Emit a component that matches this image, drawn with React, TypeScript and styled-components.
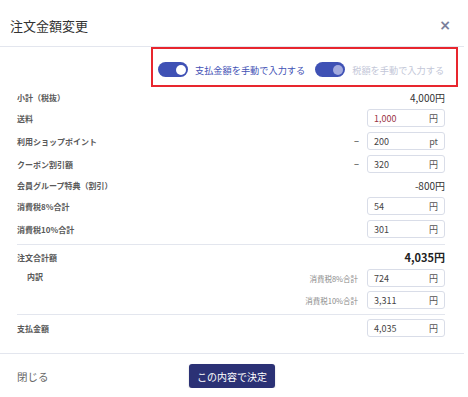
import React from 'react'
import styled, { createGlobalStyle } from 'styled-components'

const GlobalStyle = createGlobalStyle`
  body {
    margin: 0;
    background: #fff;
    font-family: "Noto Sans CJK JP", "Noto Sans", sans-serif;
    color: #333;
  }
`

export const App = () => {
  return (
    <Dialog>
      <GlobalStyle />
      <Header>
        <Title>注文金額変更</Title>
        <Close>×</Close>
      </Header>

      <ToggleBar>
        <ToggleItem>
          <Switch><Knob /></Switch>
          <ToggleLabel>支払金額を手動で入力する</ToggleLabel>
        </ToggleItem>
        <ToggleItem>
          <Switch><Knob $dim /></Switch>
          <ToggleLabel $dim>税額を手動で入力する</ToggleLabel>
        </ToggleItem>
      </ToggleBar>

      <Body>
        <Section $top>
          <Row $text>
            <Label>小計（税抜）</Label>
            <Value>4,000円</Value>
          </Row>
          <Row>
            <Label>送料</Label>
            <Field value='1,000' unit='円' accent />
          </Row>
          <Row>
            <Label>利用ショップポイント</Label>
            <Right>
              <Minus>−</Minus>
              <Field value='200' unit='pt' />
            </Right>
          </Row>
          <Row>
            <Label>クーポン割引額</Label>
            <Right>
              <Minus>−</Minus>
              <Field value='320' unit='円' />
            </Right>
          </Row>
          <Row $text>
            <Label>会員グループ特典（割引）</Label>
            <Value>-800円</Value>
          </Row>
          <Row>
            <Label>消費税8%合計</Label>
            <Field value='54' unit='円' />
          </Row>
          <Row>
            <Label>消費税10%合計</Label>
            <Field value='301' unit='円' />
          </Row>
        </Section>

        <Section>
          <Row $text>
            <Label>注文合計額</Label>
            <Value $bold>4,035円</Value>
          </Row>
          <Breakdown>
            <SubLabel>内訳</SubLabel>
            <SubRows>
              <Right>
                <TaxLabel>消費税8%合計</TaxLabel>
                <Field value='724' unit='円' />
              </Right>
              <Right>
                <TaxLabel>消費税10%合計</TaxLabel>
                <Field value='3,311' unit='円' />
              </Right>
            </SubRows>
          </Breakdown>
        </Section>

        <Section $last>
          <Row>
            <Label>支払金額</Label>
            <Field value='4,035' unit='円' />
          </Row>
        </Section>
      </Body>

      <Footer>
        <CloseLink>閉じる</CloseLink>
        <Submit>この内容で決定</Submit>
        <span />
      </Footer>
    </Dialog>
  )
}

const Field = ({ value, unit, accent }: { value: string; unit: string; accent?: boolean }) => (
  <InputBox>
    <InputText $accent={accent}>{value}</InputText>
    <Unit>{unit}</Unit>
  </InputBox>
)

export default App

const Dialog = styled.div`
  width: 464px;
  background: #fff;
`

const Header = styled.div`
  height: 42px;
  padding: 4px 13px 0 10px;
  display: flex;
  align-items: center;
  justify-content: space-between;
  border-bottom: 1px solid #e3e6ee;
`

const Title = styled.h2`
  margin: 0;
  font-size: 13px;
  font-weight: 400;
  color: #333;
`

const Close = styled.span`
  font-family: "DejaVu Sans", sans-serif;
  font-size: 14px;
  font-weight: 700;
  color: #7a809c;
  line-height: 1;
`

const ToggleBar = styled.div`
  box-sizing: border-box;
  margin-left: 151px;
  width: 307px;
  height: 40px;
  border: 2px solid #e8262e;
  padding: 5px 0 0 5px;
  display: flex;
  align-items: center;
  gap: 10px;
`

const ToggleItem = styled.div`
  display: flex;
  align-items: center;
  gap: 7px;
`

const Switch = styled.div`
  width: 30px;
  height: 15px;
  border-radius: 8px;
  background: #3f51b5;
  display: flex;
  align-items: center;
  justify-content: flex-end;
  padding-right: 2px;
  box-sizing: border-box;
`

const Knob = styled.div<{ $dim?: boolean }>`
  width: 10px;
  height: 10px;
  border-radius: 50%;
  background: ${p => (p.$dim ? '#a3aade' : '#fff')};
`

const ToggleLabel = styled.span<{ $dim?: boolean }>`
  font-size: 9.2px;
  color: ${p => (p.$dim ? '#c3c7d8' : '#3f51b5')};
  white-space: nowrap;
`

const Body = styled.div`
  padding: 0 19px 0 17px;
`

const Section = styled.div<{ $top?: boolean; $last?: boolean }>`
  display: flex;
  flex-direction: column;
  gap: 5px;
  padding: ${p => (p.$top ? '3px 0 6px' : p.$last ? '4px 0 16px' : '5px 0 5px')};
  border-bottom: ${p => (p.$last ? 'none' : '1px solid #e3e6ee')};
`

const Row = styled.div<{ $text?: boolean }>`
  height: ${p => (p.$text ? '14px' : '18px')};
  display: flex;
  align-items: center;
  justify-content: space-between;
`

const Label = styled.span`
  font-size: 8px;
  font-weight: 700;
  color: #5a5a5a;
  white-space: nowrap;
`

const Value = styled.span<{ $bold?: boolean }>`
  font-size: ${p => (p.$bold ? '11px' : '10px')};
  font-weight: ${p => (p.$bold ? 700 : 400)};
  color: ${p => (p.$bold ? '#222' : '#333')};
`

const Right = styled.div`
  display: flex;
  align-items: center;
  justify-content: flex-end;
`

const Minus = styled.span`
  font-size: 9px;
  color: #333;
  margin-right: 8px;
`

const InputBox = styled.div`
  box-sizing: border-box;
  width: 78px;
  height: 18px;
  border: 1px solid #d9dde8;
  border-radius: 3px;
  display: flex;
  align-items: center;
  justify-content: space-between;
  padding: 0 6px 0 6px;
  background: #fff;
`

const InputText = styled.span<{ $accent?: boolean }>`
  font-size: 9px;
  color: ${p => (p.$accent ? '#9a3444' : '#444')};
`

const Unit = styled.span`
  font-size: 9px;
  color: #555;
`

const Breakdown = styled.div`
  display: flex;
  justify-content: space-between;
  align-items: flex-start;
`

const SubLabel = styled.span`
  font-size: 8px;
  font-weight: 700;
  color: #5a5a5a;
  margin: 2px 0 0 10px;
`

const SubRows = styled.div`
  display: flex;
  flex-direction: column;
  gap: 4px;
`

const TaxLabel = styled.span`
  font-size: 7.5px;
  color: #8a8a8a;
  margin-right: 9px;
`

const Footer = styled.div`
  display: grid;
  grid-template-columns: 1fr auto 1fr;
  align-items: center;
  padding: 10px 17px 0;
  border-top: 1px solid #e3e6ee;
`

const CloseLink = styled.span`
  font-size: 10.5px;
  color: #666;
`

const Submit = styled.button`
  width: 86px;
  height: 24px;
  border: none;
  border-radius: 3px;
  background: #2b3175;
  color: #fff;
  font-family: inherit;
  font-size: 10px;
  padding: 0;
  box-shadow: 0 1px 2px rgba(0, 0, 0, 0.2);
`
